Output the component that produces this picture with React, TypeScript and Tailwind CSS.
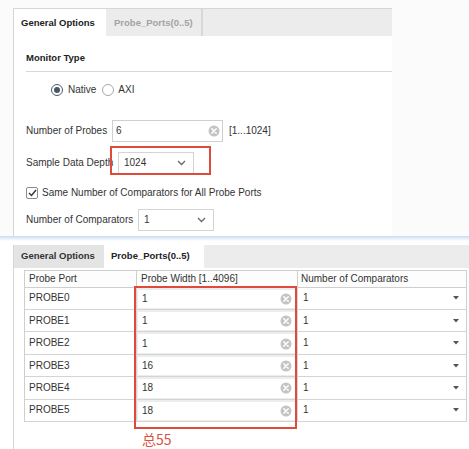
import React from "react";

const ClearIcon = () => (
  <svg width="12" height="12" viewBox="0 0 12 12" className="shrink-0">
    <circle cx="6" cy="6" r="5.5" fill="#c4c4c4" />
    <path d="M3.8 3.8 L8.2 8.2 M8.2 3.8 L3.8 8.2" stroke="#fff" strokeWidth="1.5" strokeLinecap="round" />
  </svg>
);

const Chevron = () => (
  <svg width="9" height="6" viewBox="0 0 9 6" className="shrink-0">
    <path d="M1 1 L4.5 4.5 L8 1" fill="none" stroke="#666" strokeWidth="1.3" />
  </svg>
);

const Caret = () => (
  <svg width="6" height="4" viewBox="0 0 6 4" className="shrink-0">
    <path d="M0 0 H6 L3 3.5 Z" fill="#555" />
  </svg>
);

const Radio = ({ checked }: { checked?: boolean }) => (
  <span
    className={`w-[12px] h-[12px] rounded-full border flex items-center justify-center bg-white ${
      checked ? "border-[#4a5a70]" : "border-[#a8a8a8]"
    }`}
  >
    {checked && <span className="w-[6px] h-[6px] rounded-full bg-[#4b5566]" />}
  </span>
);

const probes = [
  { name: "PROBE0", width: "1" },
  { name: "PROBE1", width: "1" },
  { name: "PROBE2", width: "1" },
  { name: "PROBE3", width: "16" },
  { name: "PROBE4", width: "18" },
  { name: "PROBE5", width: "18" },
];

export default function App() {
  return (
    <div
      className="relative w-[469px] h-[449px] overflow-hidden bg-white text-[10px] leading-[14px] text-[#333]"
      style={{ fontFamily: '"Liberation Sans", Arial, sans-serif' }}
    >
      {/* top panel */}
      <div className="h-[236px] pt-[8px] pl-[13px] bg-[#fbfbfb]">
        <div className="h-full w-[379px] border-l border-t border-[#d6d6d6] bg-white flex flex-col">
          <div className="flex h-[27px] bg-[#ececec]">
            <div className="w-[92px] bg-white flex items-center pl-[7px] font-bold text-[9.5px] text-[#222]">General Options</div>
            <div className="w-[97px] flex items-center pl-[8px] font-bold text-[9.5px] text-[#a3a3a3] border-r-2 border-[#d8d8d8]">
              Probe_Ports(0..5)
            </div>
            <div className="flex-1" />
          </div>
          <div className="pl-[12px] flex flex-col">
            <div className="mt-[15px] pb-[6px] border-b border-[#d8d8d8] font-bold text-[9.5px] text-[#222]">Monitor Type</div>
            <div className="mt-[11px] ml-[25px] flex items-center h-[14px]">
              <Radio checked />
              <span className="ml-[5px]">Native</span>
              <span className="ml-[6px]">
                <Radio />
              </span>
              <span className="ml-[4px]">AXI</span>
            </div>
            <div className="mt-[23px] flex items-center h-[22px]">
              <span className="w-[86px] whitespace-nowrap">Number of Probes</span>
              <div className="w-[111px] h-[22px] border border-[#cfcfcf] flex items-center pl-[3px] pr-[2px]">
                <span className="flex-1">6</span>
                <ClearIcon />
              </div>
              <span className="ml-[6px]">[1...1024]</span>
            </div>
            <div className="mt-[10px] flex items-center h-[22px]">
              <span className="w-[92px] whitespace-nowrap overflow-hidden">Sample Data Depth</span>
              <div className="w-[76px] h-[22px] border border-[#d4d4d4] flex items-center pl-[5px] pr-[7px]">
                <span className="flex-1">1024</span>
                <Chevron />
              </div>
            </div>
            <div className="mt-[12px] flex items-center h-[14px]">
              <span className="w-[12px] h-[12px] border border-[#8a8a8a] bg-white flex items-center justify-center rounded-[2px]">
                <svg width="9" height="8" viewBox="0 0 9 8">
                  <path d="M1 4 L3.5 6.5 L8 1" fill="none" stroke="#333" strokeWidth="1.4" />
                </svg>
              </span>
              <span className="ml-[4px]">Same Number of Comparators for All Probe Ports</span>
            </div>
            <div className="mt-[9px] flex items-center h-[22px]">
              <span className="w-[112px] whitespace-nowrap">Number of Comparators</span>
              <div className="w-[76px] h-[22px] border border-[#d4d4d4] flex items-center pl-[5px] pr-[7px]">
                <span className="flex-1">1</span>
                <Chevron />
              </div>
            </div>
          </div>
        </div>
      </div>

      {/* divider shadow */}
      <div className="h-[5px] bg-gradient-to-b from-[#c9dcf1] to-white" />

      {/* bottom panel */}
      <div className="pt-[4px] pl-[13px]">
        <div className="border-l border-[#d6d6d6] h-[204px] flex flex-col">
          <div className="flex h-[23px] bg-[#ececec]">
            <div className="w-[90px] bg-[#e4e4e4] flex items-center pl-[7px] font-bold text-[9.5px] text-[#333]">General Options</div>
            <div className="w-[100px] bg-white flex items-center pl-[7px] font-bold text-[9.5px] text-[#222]">Probe_Ports(0..5)</div>
            <div className="flex-1" />
          </div>
          <div className="pl-[10px] pt-[2px]">
            <div className="w-[443px] border-l border-t border-r border-[#cfcfcf]">
              <div className="flex h-[17px] border-b border-[#cfcfcf] bg-[#fdfdfd]">
                <div className="w-[112px] border-r border-[#cfcfcf] pl-[4px] flex items-center">Probe Port</div>
                <div className="w-[161px] border-r border-[#cfcfcf] pl-[4px] flex items-center">Probe Width [1..4096]</div>
                <div className="flex-1 pl-[3px] flex items-center">Number of Comparators</div>
              </div>
              {probes.map((p) => (
                <div key={p.name} className="flex h-[22.4px] border-b border-[#d4d4d4]">
                  <div className="w-[112px] border-r border-[#d4d4d4] pl-[4px] flex items-center">{p.name}</div>
                  <div className="w-[161px] border-r border-[#d4d4d4] bg-[#ededed] p-[1px] pt-[2px]">
                    <div className="h-full bg-white flex items-center pl-[4px] pr-[4px]">
                      <span className="flex-1">{p.width}</span>
                      <ClearIcon />
                    </div>
                  </div>
                  <div className="flex-1 flex items-center pl-[5px] pr-[7px]">
                    <span className="flex-1">1</span>
                    <Caret />
                  </div>
                </div>
              ))}
            </div>
            <div className="ml-[118px] mt-[7px] text-[14px] leading-[20px] text-[#e0503f]" style={{ fontFamily: '"Noto Sans CJK SC", "Liberation Sans", sans-serif' }}>
              总55
            </div>
          </div>
        </div>
      </div>

      {/* annotation boxes */}
      <div className="absolute left-[110px] top-[146px] w-[101px] h-[29px] border-2 border-[#df4a3c]" />
      <div className="absolute left-[134px] top-[286px] w-[163px] h-[143px] border-2 border-[#df4a3c]" />
    </div>
  );
}
